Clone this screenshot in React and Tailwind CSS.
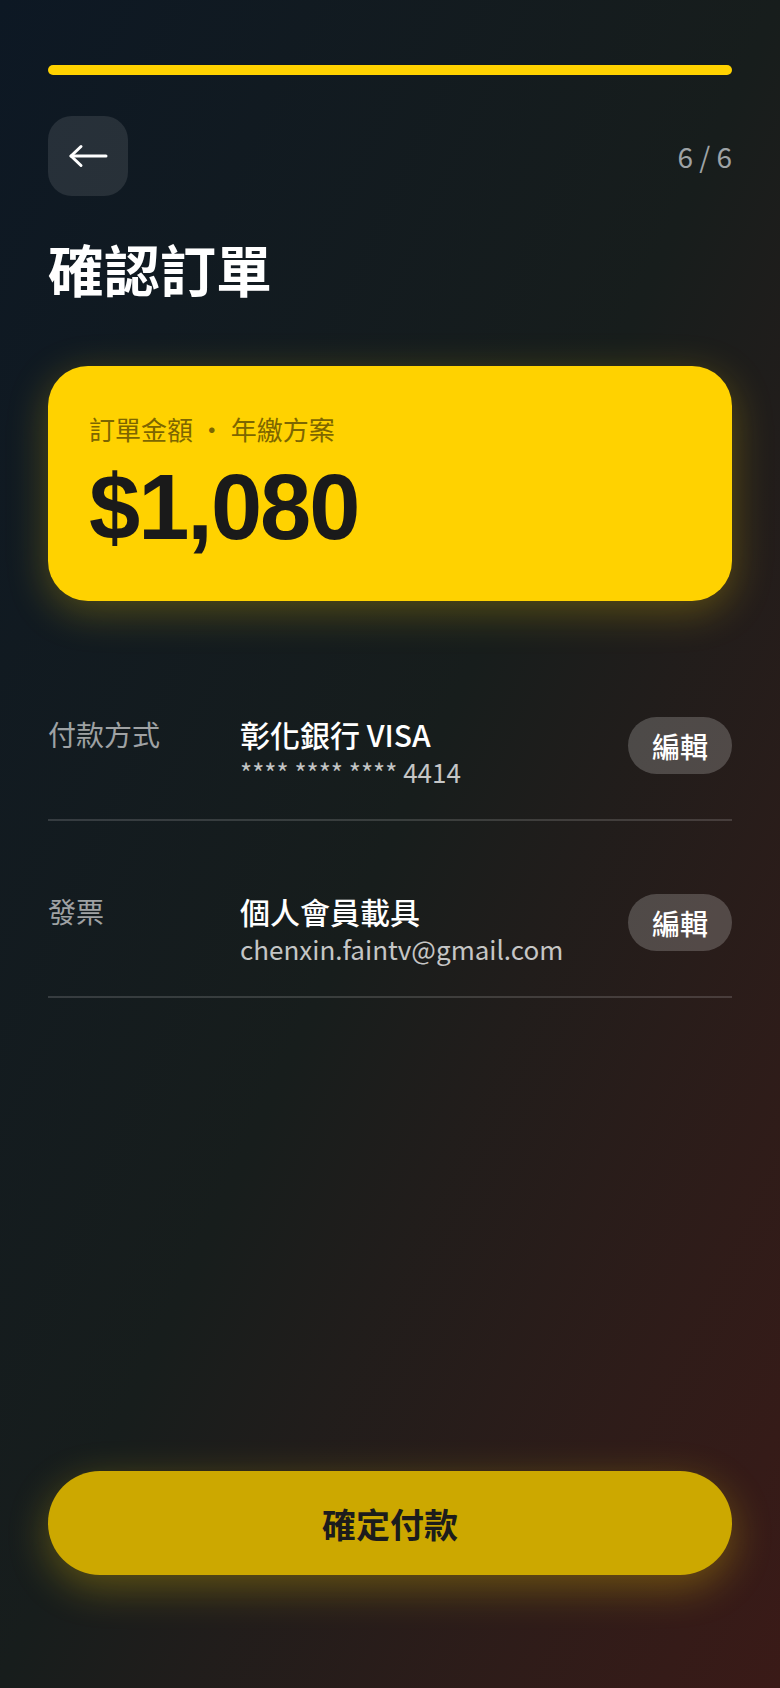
import { useState } from 'react';

const rows = [
    { label: '付款方式', title: '彰化銀行 VISA', sub: '**** **** **** 4414' },
    { label: '發票', title: '個人會員載具', sub: 'chenxin.faintv@gmail.com' },
];

const BackArrow = () => (
    <svg width="40" height="24" viewBox="0 0 40 24" fill="none" stroke="white" strokeWidth="3" strokeLinecap="round" strokeLinejoin="round">
        <path d="M3 12H38" />
        <path d="M13 2.5 3 12l10 9.5" />
    </svg>
);

const App = () => {
    const [step] = useState(6);

    return (
        <div className="min-h-screen flex flex-col px-12 bg-gradient-to-br from-[#0d1824] via-[#171d1c] to-[#3a1a17] font-['Noto_Sans_CJK_TC',sans-serif] text-white">
            {/* Progress */}
            <div className="pt-[65px]">
                <div className="h-[10px] w-full rounded-full bg-[#ffd200]"></div>
            </div>

            {/* Header */}
            <div className="mt-[41px] flex items-center justify-between">
                <button className="w-20 h-20 rounded-[24px] bg-white/10 flex items-center justify-center">
                    <BackArrow />
                </button>
                <span className="text-[28px] text-[#9ea3a6]">{step} / 6</span>
            </div>

            <h1 className="mt-[38px] text-[56px] leading-[1.2] font-bold">確認訂單</h1>

            {/* Amount card */}
            <div className="mt-[65px] rounded-[40px] bg-[#ffd200] px-[41px] pt-[45px] pb-[48px] shadow-[0_10px_40px_rgba(255,210,0,0.28)]">
                <p className="text-[26px] leading-[36px] text-[#7d6600]">訂單金額 ・ 年繳方案</p>
                <p className="mt-[14px] text-[92px] leading-none font-bold tracking-[-2px] text-[#1a1a1a] font-['Liberation_Sans',Arial,sans-serif]">$1,080</p>
            </div>

            {/* Detail rows */}
            <div className="mt-[43px]">
                {rows.map((row) => (
                    <div key={row.label} className="flex items-start pt-[70px] pb-[29px] border-b-2 border-white/15">
                        <span className="w-[192px] shrink-0 text-[28px] leading-[40px] text-white/60">{row.label}</span>
                        <div className="flex-1 flex flex-col">
                            <span className="text-[30px] leading-[40px] font-medium">{row.title}</span>
                            <span className="text-[26px] leading-[36px] text-white/75">{row.sub}</span>
                        </div>
                        <button className="mt-[3px] w-[104px] h-[57px] rounded-full bg-white/20 text-[28px] font-medium flex items-center justify-center">編輯</button>
                    </div>
                ))}
            </div>

            <div className="flex-1"></div>

            {/* Confirm */}
            <div className="pb-[113px]">
                <button className="w-full h-[104px] rounded-full bg-[#cca800] text-[34px] font-bold text-[#1c1c1c] shadow-[0_12px_40px_rgba(255,210,0,0.3)]">確定付款</button>
            </div>
        </div>
    );
};

export default App;
